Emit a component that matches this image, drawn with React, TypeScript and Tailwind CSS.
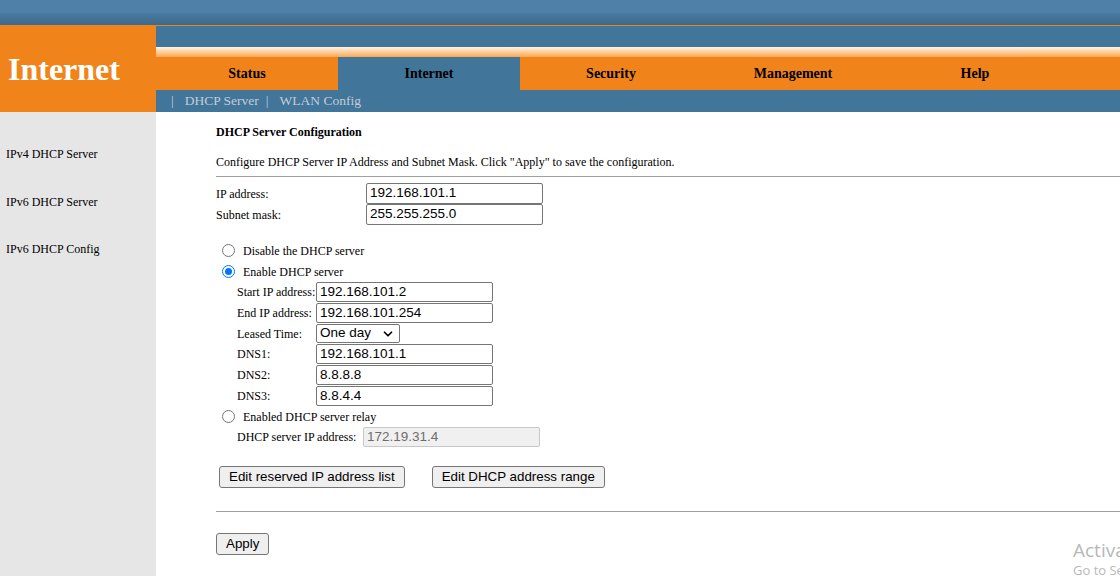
import { ChevronDown } from 'lucide-react'

const tabs = ['Status', 'Internet', 'Security', 'Management', 'Help']
const side = ['IPv4 DHCP Server', 'IPv6 DHCP Server', 'IPv6 DHCP Config']

const serif = "font-['Liberation_Serif','Times_New_Roman',serif]"
const sans = "font-['Liberation_Sans',Arial,sans-serif]"

function TextBox({
  value,
  height = 'h-[21px]',
  disabled = false,
}: {
  value: string
  height?: string
  disabled?: boolean
}) {
  return (
    <div
      className={`w-[177px] ${height} ${sans} flex items-center rounded-[2px] border px-[3px] text-[13.5px] ${
        disabled ? 'border-[#c8c8c8] bg-[#f0f0f0] text-[#6d6d6d]' : 'border-[#767676] bg-white text-black'
      }`}
    >
      {value}
    </div>
  )
}

function Radio({ checked = false }: { checked?: boolean }) {
  return (
    <span
      className={`ml-[6px] mr-[8px] flex h-[13px] w-[13px] items-center justify-center rounded-full border ${
        checked ? 'border-[#0075ff]' : 'border-[#767676]'
      } bg-white`}
    >
      {checked && <span className="h-[7px] w-[7px] rounded-full bg-[#0075ff]" />}
    </span>
  )
}

function SubRow({ label, children }: { label: string; children: React.ReactNode }) {
  return (
    <div className="flex items-center pl-[21px]">
      <span className="w-[79px] text-[12px]">{label}</span>
      {children}
    </div>
  )
}

export default function App() {
  return (
    <div className={`relative h-[576px] w-[1120px] overflow-hidden bg-white ${serif} text-black`}>
      {/* top band */}
      <div className="h-[13px] bg-[#4f80a8]" />
      <div className="h-[12px] bg-gradient-to-b from-[#4a7aa0] to-[#3d6a8c]" />
      <div className="h-px bg-[#f0841a]" />

      <div className="flex">
        <div className="flex h-[86px] w-[156px] items-center bg-[#f0841a] pl-[8px]">
          <span className="text-[32px] font-bold text-white">Internet</span>
        </div>
        <div className="flex flex-1 flex-col">
          <div className="h-[21px] bg-[#41759a]" />
          <div className="h-[10px] bg-gradient-to-b from-[#fff3e6] via-[#ffcf98] to-[#fba650]" />
          <div className="flex h-[33px] bg-[#f0841a]">
            {tabs.map((t) => (
              <div
                key={t}
                className={`flex w-[182px] items-center justify-center text-[14px] font-bold ${
                  t === 'Internet' ? 'bg-[#41759a]' : ''
                }`}
              >
                {t}
              </div>
            ))}
          </div>
          <div className="flex h-[22px] items-center bg-[#41759a] pl-[15px] text-[13.5px] text-[#c5ccd4]">
            <span>|</span>
            <span className="ml-[11px]">DHCP Server</span>
            <span className="ml-[7px]">|</span>
            <span className="ml-[11px]">WLAN Config</span>
          </div>
        </div>
      </div>

      <div className="flex">
        <div className="h-[464px] w-[156px] bg-[#e6e6e6] pt-[34px] pl-[6px] text-[12px]">
          {side.map((s) => (
            <div key={s} className="h-[47.5px] leading-[16px]">
              {s}
            </div>
          ))}
        </div>

        <div className="flex-1 pl-[60px] pt-[12px] text-[12px]">
          <div className="h-[16px] font-bold leading-[16px]">DHCP Server Configuration</div>
          <div className="mt-[14px] h-[16px] leading-[16px]">
            Configure DHCP Server IP Address and Subnet Mask. Click "Apply" to save the configuration.
          </div>
          <div className="mt-[6px] h-px bg-[#a0a0a0]" />

          <div className="mt-[6px] flex items-center">
            <span className="w-[150px]">IP address:</span>
            <TextBox value="192.168.101.1" />
          </div>
          <div className="flex items-center">
            <span className="w-[150px]">Subnet mask:</span>
            <TextBox value="255.255.255.0" />
          </div>

          <div className="mt-[15px] flex h-[21px] items-center">
            <Radio />
            <span>Disable the DHCP server</span>
          </div>
          <div className="flex h-[21px] items-center">
            <Radio checked />
            <span>Enable DHCP server</span>
          </div>

          <div className="flex flex-col gap-[1px]">
            <SubRow label="Start IP address:">
              <TextBox value="192.168.101.2" height="h-[20px]" />
            </SubRow>
            <SubRow label="End IP address:">
              <TextBox value="192.168.101.254" height="h-[20px]" />
            </SubRow>
            <SubRow label="Leased Time:">
              <div
                className={`flex h-[19px] w-[84px] items-center justify-between rounded-[2px] border border-[#767676] bg-white pl-[3px] pr-[4px] text-[13.5px] ${sans}`}
              >
                <span>One day</span>
                <ChevronDown size={14} strokeWidth={3} />
              </div>
            </SubRow>
            <SubRow label="DNS1:">
              <TextBox value="192.168.101.1" height="h-[20px]" />
            </SubRow>
            <SubRow label="DNS2:">
              <TextBox value="8.8.8.8" height="h-[20px]" />
            </SubRow>
            <SubRow label="DNS3:">
              <TextBox value="8.8.4.4" height="h-[20px]" />
            </SubRow>
          </div>

          <div className="flex h-[21px] items-center">
            <Radio />
            <span>Enabled DHCP server relay</span>
          </div>
          <div className="flex items-center pl-[21px]">
            <span className="w-[126px]">DHCP server IP address:</span>
            <TextBox value="172.19.31.4" height="h-[20px]" disabled />
          </div>

          <div className={`mt-[19px] flex gap-[27px] pl-[3px] text-[13.33px] ${sans}`}>
            <button className="h-[22px] rounded-[3px] border border-[#767676] bg-[#efefef] px-[9px]">
              Edit reserved IP address list
            </button>
            <button className="h-[22px] rounded-[3px] border border-[#767676] bg-[#efefef] px-[9px]">
              Edit DHCP address range
            </button>
          </div>

          <div className="mt-[23px] h-px bg-[#a0a0a0]" />

          <button
            className={`mt-[21px] h-[22px] rounded-[3px] border border-[#767676] bg-[#efefef] px-[9px] text-[13.33px] ${sans}`}
          >
            Apply
          </button>
        </div>
      </div>

      <div className="absolute left-[1073px] top-[538px] whitespace-nowrap font-['Open_Sans',sans-serif] text-[#b8b8b8]">
        <div className="text-[19px] leading-[24px]">Activate Windows</div>
        <div className="text-[13px] leading-[16px]">Go to Settings to activate Windows.</div>
      </div>
    </div>
  )
}
